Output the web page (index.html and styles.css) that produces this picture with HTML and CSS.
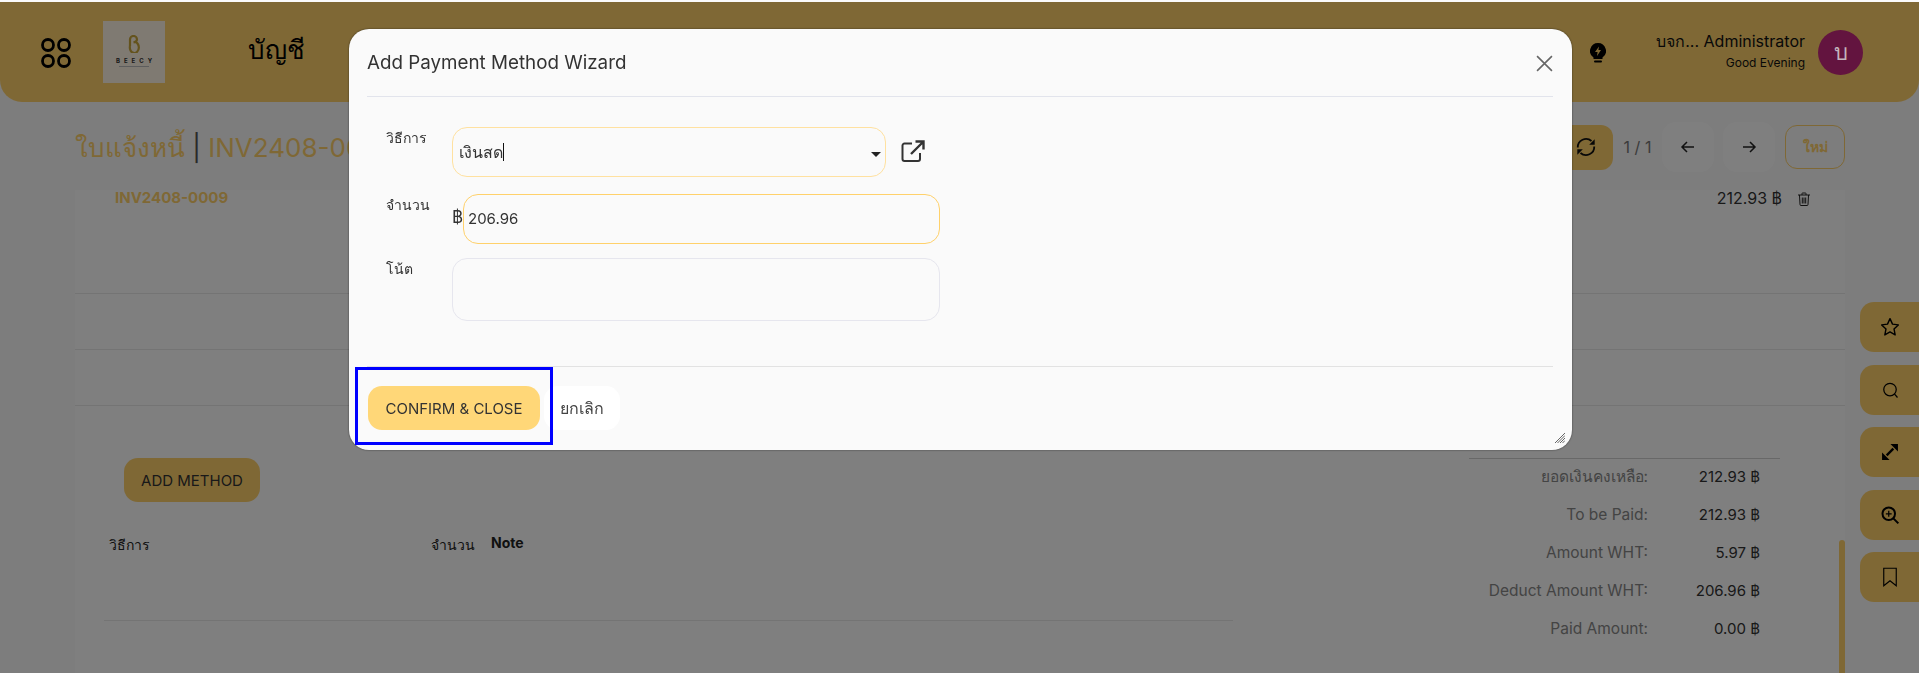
FILE: index.html
```html
<!DOCTYPE html>
<html lang="en">
<head>
    <meta charset="UTF-8">
    <meta name="viewport" content="width=device-width, initial-scale=1.0">
    <title>Add Payment Method Wizard</title>
    <link rel="stylesheet" href="styles.css">
</head>
<body>
    <!-- Top Bar -->
    <header class="topbar">
        <svg class="apps-icon" viewBox="0 0 30 30" fill="none" stroke="#000" stroke-width="2.800">
            <circle cx="7" cy="7" r="5.500"/><circle cx="23" cy="7" r="5.500"/>
            <circle cx="7" cy="23" r="5.500"/><circle cx="23" cy="23" r="5.500"/>
        </svg>
        <div class="logo">
            <svg class="logo-mark" viewBox="0 0 14 18" fill="none" stroke="#c9a63a" stroke-width="2.200">
                <path d="M3 11V4.500a3.500 3.500 0 0 1 7 0C10 6.500 8.500 7 6.500 7.500"/>
                <path d="M3 11a4.500 5.500 0 1 0 4-4c2.500-.2 4.500 1.500 4.500 4"/>
            </svg>
            <span class="logo-name">BEECY</span>
            <span class="logo-rule"></span>
        </div>
        <div class="module-name">บัญชี</div>
        <div class="topbar-right">
            <svg class="bulb-icon" viewBox="0 0 16 20" fill="#000">
                <path d="M8 0a8 8 0 0 0-4.500 14.600V16h9v-1.400A8 8 0 0 0 8 0zm1 3.500L8.400 7H11l-4 6 .6-4H5l4-5.500z" fill-rule="evenodd"/>
                <rect x="4" y="17.500" width="8" height="2" rx="1"/>
            </svg>
            <div class="user-text">
                <div class="user-name">บจก... Administrator</div>
                <div class="user-greeting">Good Evening</div>
            </div>
            <div class="avatar">บ</div>
        </div>
    </header>

    <!-- Page Behind The Dialog -->
    <main class="page">
        <div class="title-row">
            <h1 class="page-title">ใบแจ้งหนี้ <span class="title-sep">|</span> INV2408-0009</h1>
            <div class="title-actions">
                <button class="btn-refresh" aria-label="Refresh">
                    <svg viewBox="0 0 24 24" fill="none" stroke="#111" stroke-width="2">
                        <path d="M3 12.500A9 9 0 0 1 18 5.500"/><path d="M21 11.500A9 9 0 0 1 6 18.500"/>
                        <path d="M21.500 3.500v6h-6z" fill="#111" stroke="none"/><path d="M2.500 20.500v-6h6z" fill="#111" stroke="none"/>
                    </svg>
                </button>
                <span class="pager">1 / 1</span>
                <button class="btn-nav" aria-label="Previous">
                    <svg viewBox="0 0 16 16" fill="none" stroke="#222" stroke-width="1.500"><path d="M14 8H2M7 3 2 8l5 5"/></svg>
                </button>
                <button class="btn-nav" aria-label="Next">
                    <svg viewBox="0 0 16 16" fill="none" stroke="#222" stroke-width="1.500"><path d="M2 8h12M9 3l5 5-5 5"/></svg>
                </button>
                <button class="btn-new">ใหม่</button>
            </div>
        </div>

        <section class="sheet">
            <div class="invoice-row">
                <span class="invoice-no">INV2408-0009</span>
                <span class="invoice-amount">212.93 ฿</span>
                <svg class="trash-icon" viewBox="0 0 12 14" fill="none" stroke="#222" stroke-width="1">
                    <path d="M0 3h12M4 3V1.500a.5.5 0 0 1 .5-.5h3a.5.5 0 0 1 .5.5V3M1.500 3l.5 9.500a1 1 0 0 0 1 1h6a1 1 0 0 0 1-1L10.500 3M4.300 5.500v6M6 5.500v6M7.700 5.500v6"/>
                </svg>
            </div>
            <div class="blank-row row-a"></div>
            <div class="blank-row row-b"></div>
            <div class="blank-row row-c"></div>

            <div class="payment-block">
                <div class="payment-left">
                    <button class="btn-add">ADD METHOD</button>
                    <div class="method-head">
                        <span class="col-method">วิธีการ</span>
                        <span class="col-amount">จำนวน</span>
                        <span class="col-note">Note</span>
                    </div>
                </div>
                <div class="totals">
                    <div class="totals-row"><span class="totals-label">ยอดเงินคงเหลือ:</span><span class="totals-value">212.93 ฿</span></div>
                    <div class="totals-row"><span class="totals-label">To be Paid:</span><span class="totals-value">212.93 ฿</span></div>
                    <div class="totals-row"><span class="totals-label">Amount WHT:</span><span class="totals-value">5.97 ฿</span></div>
                    <div class="totals-row"><span class="totals-label">Deduct Amount WHT:</span><span class="totals-value">206.96 ฿</span></div>
                    <div class="totals-row"><span class="totals-label">Paid Amount:</span><span class="totals-value">0.00 ฿</span></div>
                </div>
            </div>
        </section>
        <div class="scroll-thumb"></div>
    </main>

    <!-- Floating Side Tools -->
    <aside class="side-tools">
        <button class="side-btn" aria-label="Favourite">
            <svg viewBox="0 0 24 24" fill="none" stroke="#000" stroke-width="1.700" stroke-linejoin="round"><path d="m12 2 3 6.600 7 .9-5.200 4.800 1.400 7.200-6.200-3.600-6.200 3.600 1.400-7.200L2 9.500l7-.9z"/></svg>
        </button>
        <button class="side-btn" aria-label="Search">
            <svg viewBox="0 0 24 24" fill="none" stroke="#000" stroke-width="1.500"><circle cx="12" cy="11.500" r="7.500"/><path d="m17.500 17 3.500 4"/></svg>
        </button>
        <button class="side-btn" aria-label="Expand">
            <svg viewBox="0 0 24 24" fill="#000" stroke="#000" stroke-width="2.800"><path d="M8 16 16 8" fill="none"/><path d="M12.500 2.500h9v9z" stroke="none"/><path d="M2.500 12.500v9h9z" stroke="none"/></svg>
        </button>
        <button class="side-btn" aria-label="Zoom">
            <svg viewBox="0 0 24 24" fill="none" stroke="#000" stroke-width="2.400"><circle cx="10.500" cy="10.500" r="7.500"/><path d="m16 16 6 6"/><path d="M10.500 7v7M7 10.500h7" stroke-width="1.500"/></svg>
        </button>
        <button class="side-btn" aria-label="Bookmark">
            <svg viewBox="0 0 24 24" fill="none" stroke="#000" stroke-width="1.400"><path d="M4.500 1.500h15v21L12 16.500l-7.500 6z"/></svg>
        </button>
    </aside>

    <div class="backdrop"></div>

    <!-- Dialog -->
    <div class="modal">
        <div class="modal-head">
            <h2 class="modal-title">Add Payment Method Wizard</h2>
            <svg class="modal-close" viewBox="0 0 16 16" fill="none" stroke="#666" stroke-width="1.500"><path d="m1 1 14 14M15 1 1 15"/></svg>
        </div>

        <div class="modal-body">
            <div class="form-row row-method">
                <label class="form-label">วิธีการ</label>
                <div class="select-box">
                    <span>เงินสด</span><span class="text-caret"></span>
                    <span class="select-arrow"></span>
                </div>
                <svg class="open-icon" viewBox="0 0 24 22" fill="none" stroke="#333" stroke-width="2">
                    <path d="M11 3.500H3.500a2 2 0 0 0-2 2V19a2 2 0 0 0 2 2H17a2 2 0 0 0 2-2v-6"/>
                    <path d="M10 14 22 2M14.500 1.500h8v8" stroke-width="2.400"/>
                </svg>
            </div>
            <div class="form-row row-amount">
                <label class="form-label">จำนวน</label>
                <span class="currency">฿</span>
                <div class="amount-box">206.96</div>
            </div>
            <div class="form-row row-note">
                <label class="form-label">โน้ต</label>
                <div class="note-box"></div>
            </div>
        </div>

        <div class="modal-foot">
            <button class="btn-confirm">CONFIRM &amp; CLOSE</button>
            <button class="btn-cancel">ยกเลิก</button>
        </div>

        <div class="highlight-box"></div>
        <svg class="resize-grip" viewBox="0 0 10 10" stroke="#666" stroke-width="1"><path d="M0 10 10 0M2.500 10 10 2.500M5 10l5-5M7.500 10 10 7.500"/></svg>
    </div>
</body>
</html>
```

FILE: styles.css
```css
/* General Styles */
* {
    box-sizing: border-box;
}

html, body {
    margin: 0;
    padding: 0;
    height: 100%;
    overflow: hidden;
}

body {
    font-family: Inter, "Noto Sans", "Noto Sans CJK SC", sans-serif;
    font-size: 14px;
    color: #444;
    background: #fafafa;
}

button {
    font: inherit;
    border: none;
    padding: 0;
    cursor: pointer;
}

svg {
    display: block;
}

/* Top Bar */
.topbar {
    height: 100px;
    margin-top: 2px;
    background: #ffd16b;
    border-radius: 0 0 22px 22px;
    display: flex;
    align-items: center;
    padding: 0 56px 0 41px;
}

.apps-icon {
    width: 30px;
    height: 30px;
    margin-top: 2px;
}

.logo {
    width: 62px;
    height: 62px;
    margin-left: 32px;
    background: #fef4e4;
    display: flex;
    flex-direction: column;
    align-items: center;
    padding-top: 14px;
}

.logo-mark {
    width: 14px;
    height: 18px;
}

.logo-name {
    font-size: 6px;
    line-height: 8px;
    letter-spacing: 4px;
    font-weight: 700;
    color: #333;
    margin-top: 4px;
    margin-right: -4px;
}

.logo-rule {
    width: 30px;
    height: 1px;
    margin-top: 1px;
    background: #bbb;
}

.module-name {
    font-size: 26px;
    color: #000;
    margin-left: 83px;
    margin-top: -6px;
}

.topbar-right {
    margin-left: auto;
    display: flex;
    align-items: center;
}

.bulb-icon {
    width: 16px;
    height: 20px;
    margin-right: 50px;
    margin-bottom: -2px;
}

.user-text {
    text-align: right;
    color: #111;
}

.user-name {
    font-size: 16px;
    line-height: 20px;
}

.user-greeting {
    font-size: 12px;
    line-height: 20px;
    margin-top: 2px;
}

/* sits above the backdrop, so its colours are already the dimmed ones */
.avatar {
    position: relative;
    z-index: 1;
    width: 45px;
    height: 45px;
    margin-left: 13px;
    border-radius: 50%;
    background: #63143f;
    color: #c4b4bd;
    font-size: 22px;
    display: flex;
    align-items: center;
    justify-content: center;
}

/* Page Behind The Dialog */
.page {
    position: relative;
    padding: 0 74px 0 75px;
}

.title-row {
    height: 88px;
    display: flex;
    align-items: center;
    justify-content: space-between;
    padding-top: 2px;
}

.page-title {
    margin: 0;
    font-size: 26px;
    font-weight: 400;
    color: #ffd16b;
}

.title-sep {
    color: #555;
}

.title-actions {
    display: flex;
    align-items: center;
}

.btn-refresh {
    width: 60px;
    height: 45px;
    background: #ffd16b;
    border-radius: 12px;
    display: flex;
    align-items: center;
    justify-content: flex-end;
    padding-right: 16px;
}

.btn-refresh svg {
    width: 22px;
    height: 22px;
}

.pager {
    width: 49px;
    text-align: center;
    font-size: 16px;
    color: #777;
}

.btn-nav {
    width: 52px;
    height: 50px;
    background: #fff;
    border-radius: 14px;
    margin-right: 9px;
    display: flex;
    align-items: center;
    justify-content: center;
}

.btn-nav svg {
    width: 16px;
    height: 16px;
}

.btn-new {
    width: 60px;
    height: 44px;
    margin-left: 1px;
    background: transparent;
    border: 1px solid #ffd16b;
    border-radius: 12px;
    color: #ffd16b;
    font-weight: 700;
}

.sheet {
    background: #fefefe;
}

.invoice-row {
    height: 46px;
    display: flex;
    align-items: flex-start;
    padding: 0 35px 0 40px;
    background: #fff;
    border-radius: 0 0 20px 20px;
}

.invoice-no {
    color: #ffd16b;
    font-weight: 700;
    font-size: 15px;
    line-height: 16px;
}

.invoice-amount {
    margin-left: auto;
    font-size: 16px;
    line-height: 16px;
    color: #333;
}

.trash-icon {
    width: 12px;
    height: 14px;
    margin-left: 16px;
    margin-top: 2px;
}

.blank-row {
    border-bottom: 1px solid #e8e8e8;
}

.row-a {
    height: 58px;
}

.row-b {
    height: 56px;
}

.row-c {
    height: 56px;
}

.payment-block {
    display: flex;
    padding: 0 65px 0 29px;
    height: 270px;
}

.payment-left {
    width: 1129px;
}

.btn-add {
    display: block;
    width: 136px;
    height: 44px;
    margin: 52px 0 0 20px;
    background: #ffd16b;
    border-radius: 14px;
    font-size: 15px;
    color: #333;
}

.method-head {
    height: 98px;
    margin-top: 21px;
    padding: 11px 0 0 5px;
    display: flex;
    border-bottom: 1px solid #e8e8e8;
    font-size: 14px;
    color: #222;
}

.col-method {
    width: 322px;
}

.col-amount {
    width: 60px;
}

.col-note {
    font-weight: 700;
}

.totals {
    margin-left: auto;
    width: 311px;
    margin-top: 52px;
    border-top: 1px solid #d0d0d0;
}

.totals-row {
    height: 38px;
    display: flex;
    align-items: center;
    font-size: 15px;
    position: relative;
    top: -2px;
}

.totals-label {
    width: 179px;
    font-size: 15.500px;
    text-align: right;
    color: #888;
}

.totals-value {
    width: 112px;
    text-align: right;
    color: #333;
}

.scroll-thumb {
    position: absolute;
    left: 1839px;
    top: 438px;
    width: 6px;
    height: 140px;
    border-radius: 3px;
    background: #ffd16b;
}

/* Floating Side Tools */
.side-tools {
    position: fixed;
    right: 0;
    top: 302px;
    display: flex;
    flex-direction: column;
    gap: 12.500px;
}

.side-btn {
    width: 59px;
    height: 50px;
    background: #ffd16b;
    border-radius: 14px 0 0 14px;
    display: flex;
    align-items: center;
    padding-left: 20px;
}

.side-btn svg {
    width: 20px;
    height: 20px;
}

/* Dialog */
.backdrop {
    position: fixed;
    inset: 2px 0 0 0;
    background: rgba(0, 0, 0, 0.5);
}

.modal {
    position: fixed;
    left: 349px;
    top: 29px;
    z-index: 2;
    width: 1223px;
    height: 421px;
    background: #fafafa;
    border-radius: 20px;
    box-shadow: 0 0 2px rgba(0, 0, 0, 0.6);
    padding: 0 18px 0 18px;
    display: flex;
    flex-direction: column;
}

.modal-head {
    height: 68px;
    flex: none;
    display: flex;
    align-items: center;
    justify-content: space-between;
    border-bottom: 1px solid #e2e4ec;
    margin-right: 1px;
}

.modal-title {
    margin: 0;
    font-size: 18.800px;
    font-weight: 400;
    color: #333;
}

.modal-close {
    width: 17px;
    height: 17px;
    margin-top: 2px;
}

.modal-body {
    flex: 1;
    padding-top: 30px;
}

.form-row {
    display: flex;
    position: relative;
}

.form-label {
    width: 85px;
    margin-left: 19px;
    color: #333;
    font-size: 14px;
    line-height: 20px;
    padding-top: 1px;
}

.row-method {
    height: 50px;
    align-items: flex-start;
}

.row-amount {
    height: 50px;
    margin-top: 17px;
}

.row-note {
    height: 63px;
    margin-top: 14px;
}

.select-box {
    width: 434px;
    height: 50px;
    margin-left: -19px;
    border: 1px solid #ffe1a0;
    border-radius: 15px;
    display: flex;
    align-items: center;
    padding-left: 6px;
    font-size: 16px;
    color: #333;
    position: relative;
}

.text-caret {
    width: 1px;
    height: 18px;
    background: #111;
}

.select-arrow {
    position: absolute;
    right: 4px;
    top: 24px;
    border: 5px solid transparent;
    border-top-color: #222;
    border-bottom: none;
}

.open-icon {
    width: 24px;
    height: 22px;
    margin: 13px 0 0 15px;
}

.currency {
    width: 11px;
    margin-left: -19px;
    margin-top: 13px;
    font-size: 17px;
    color: #333;
}

.amount-box {
    width: 477px;
    height: 50px;
    border: 1px solid #ffd16b;
    border-radius: 15px;
    padding-left: 4px;
    line-height: 47px;
    color: #333;
    font-size: 15px;
}

.note-box {
    width: 488px;
    height: 63px;
    margin-left: -19px;
    border: 1px solid #e6e6ee;
    border-radius: 15px;
}

.modal-foot {
    height: 84px;
    flex: none;
    display: flex;
    gap: 4px;
    padding: 19px 0 0 1px;
    margin-right: 1px;
    border-top: 1px solid #e2e2e2;
}

.btn-confirm {
    width: 172px;
    height: 44px;
    background: #ffd778;
    border-radius: 14px;
    font-size: 15px;
    color: #333;
}

.btn-cancel {
    width: 76px;
    height: 44px;
    background: #fff;
    border-radius: 14px;
    font-size: 16px;
    color: #444;
}

.highlight-box {
    position: absolute;
    left: 6px;
    top: 338px;
    width: 198px;
    height: 78px;
    border: 3px solid #0000ff;
}

.resize-grip {
    position: absolute;
    right: 7px;
    bottom: 7px;
    width: 10px;
    height: 10px;
}
```
